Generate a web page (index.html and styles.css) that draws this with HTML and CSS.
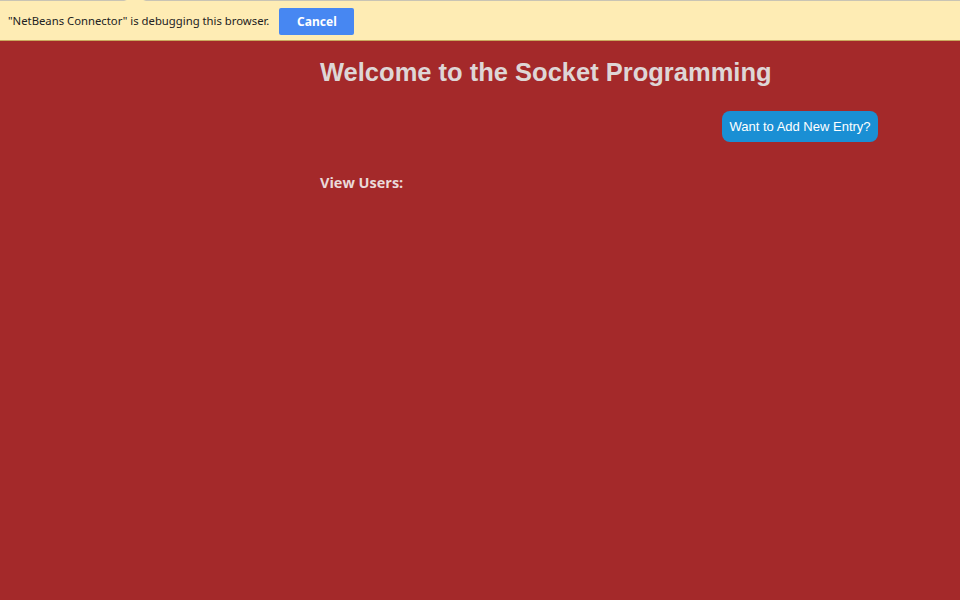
FILE: index.html
```html
<!DOCTYPE html>
<html>
<head>
<meta charset="utf-8">
<link rel="stylesheet" href="styles.css">
</head>
<body>
<div class="infobar">
  <span class="notch"></span>
  <span class="msg">"NetBeans Connector" is debugging this browser.</span>
  <button class="cancel">Cancel</button>
</div>
<main class="page">
  <div class="content">
    <h1 class="title">Welcome to the Socket Programming</h1>
    <div class="actions">
      <button class="add">Want to Add New Entry?</button>
    </div>
    <h3 class="users">View Users:</h3>
  </div>
</main>
</body>
</html>
```
FILE: styles.css
```css
html, body {
  margin: 0;
  padding: 0;
  height: 100%;
}
body {
  background: #a4292a;
  display: flex;
  flex-direction: column;
  font-family: "Liberation Sans", Arial, sans-serif;
}
.infobar {
  position: relative;
  height: 39px;
  border-top: 1px solid #c9c4b4;
  border-bottom: 1px solid #c9a95e;
  background: #feecb4;
  display: flex;
  align-items: center;
  padding-left: 8px;
  gap: 10px;
  flex: none;
}
.notch {
  position: absolute;
  left: 124px;
  top: -1px;
  width: 22px;
  height: 4px;
  background: #feecb4;
  clip-path: polygon(0 0, 100% 0, 50% 100%);
}
.msg {
  font-family: "Noto Sans", "Open Sans", sans-serif;
  font-size: 11.3px;
  color: #222;
}
.cancel {
  width: 75px;
  height: 27px;
  border: none;
  border-radius: 2px;
  background: #4787f2;
  color: #fff;
  font-family: "Noto Sans", sans-serif;
  font-weight: 700;
  font-size: 12px;
  margin-top: 1px;
}
.page {
  flex: 1;
}
.content {
  margin-left: 320px;
  width: 558px;
}
.title {
  margin: 16px 0 0;
  font-size: 25.5px;
  line-height: 30px;
  color: #ded6d6;
  font-weight: 700;
}
.actions {
  display: flex;
  justify-content: flex-end;
  margin-top: 24px;
}
.add {
  height: 31px;
  width: 156px;
  padding: 0;
  border: none;
  border-radius: 8px;
  background: #1a8fd4;
  color: #fff;
  font-family: "Liberation Sans", Arial, sans-serif;
  font-size: 13px;
}
.users {
  margin: 31px 0 0;
  font-family: "Open Sans", sans-serif;
  font-size: 14.5px;
  font-weight: 700;
  color: #ead9d9;
}
```
